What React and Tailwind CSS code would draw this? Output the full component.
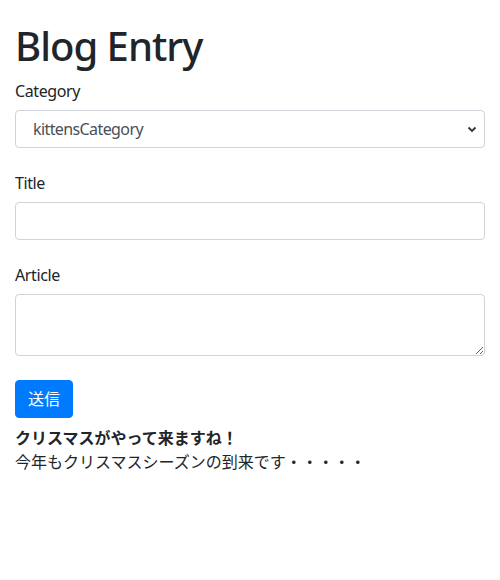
export default function App() {
  const font = { fontFamily: '"Noto Sans", "Noto Sans CJK JP", sans-serif' };
  return (
    <div
      className="min-h-[580px] bg-white px-[15px] pt-[22px] text-[16px] leading-6 text-[#212529]"
      style={font}
    >
      <h1 className="mb-2 text-[40px] font-medium leading-[48px] tracking-[-1px]">Blog Entry</h1>

      <form>
        <div className="mb-[22px]">
          <label className="mb-2 block pt-[2px] leading-[22px] tracking-[-0.4px]">Category</label>
          <div className="relative">
            <select
              defaultValue="kittens"
              className="block h-[38px] w-full appearance-none rounded border border-[#ced4da] bg-white pl-[17px] pr-8 text-[16px] tracking-[-0.6px] text-[#495057] outline-none"
            >
              <option value="kittens">kittensCategory</option>
            </select>
            <svg
              className="pointer-events-none absolute right-[8px] top-1/2 -translate-y-1/2"
              width="10"
              height="10"
              viewBox="0 0 10 10"
            >
              <path d="M1.5 3.5 L5 7 L8.5 3.5" fill="none" stroke="#333" strokeWidth="1.8" />
            </svg>
          </div>
        </div>

        <div className="mb-[22px]">
          <label className="mb-2 block pt-[2px] leading-[22px] tracking-[-0.4px]">Title</label>
          <input
            type="text"
            className="block h-[38px] w-full rounded border border-[#ced4da] bg-white px-3 text-[#495057] outline-none"
          />
        </div>

        <div className="mb-6">
          <label className="mb-2 block pt-[2px] leading-[22px] tracking-[-0.4px]">Article</label>
          <textarea
            rows={2}
            className="block h-[62px] w-full rounded border border-[#ced4da] bg-white px-3 py-1.5 text-[#495057] outline-none"
          />
        </div>

        <button
          type="button"
          className="h-[38px] rounded border border-[#007bff] bg-[#007bff] px-3 text-[16px] text-white"
        >
          送信
        </button>
      </form>

      <div className="mt-2">
        <p className="font-bold">クリスマスがやって来ますね！</p>
        <p>今年もクリスマスシーズンの到来です・・・・・</p>
      </div>
    </div>
  );
}
